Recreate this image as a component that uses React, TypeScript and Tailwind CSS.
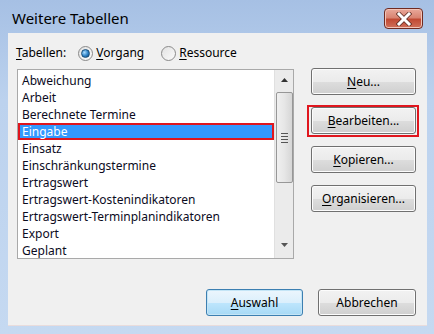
import { useState } from 'react'

const tables = [
  'Abweichung',
  'Arbeit',
  'Berechnete Termine',
  'Eingabe',
  'Einsatz',
  'Einschränkungstermine',
  'Ertragswert',
  'Ertragswert-Kostenindikatoren',
  'Ertragswert-Terminplanindikatoren',
  'Export',
  'Geplant',
]

const font = { fontFamily: '"Noto Sans", "Open Sans", sans-serif' }

function Key({ k, rest }: { k: string; rest: string }) {
  return (
    <span>
      <span className="underline underline-offset-2">{k}</span>
      {rest}
    </span>
  )
}

function Radio({ checked }: { checked: boolean }) {
  return (
    <span className="flex h-[15px] w-[15px] items-center justify-center rounded-full border border-[#8a8a8a] bg-gradient-to-br from-[#e2e2e2] to-[#fbfbfb]">
      {checked && (
        <span className="h-[9px] w-[9px] rounded-full border border-[#1b4f7a] bg-[radial-gradient(circle_at_35%_35%,#a9dcff,#2b7fc4_55%,#0d3f6e)]" />
      )}
    </span>
  )
}

function WinButton({ children, wide = 'w-[105px]', primary = false }: { children: React.ReactNode; wide?: string; primary?: boolean }) {
  return (
    <button
      className={
        'flex h-[27px] items-center justify-center rounded-[3px] border text-[12px] text-black ' +
        wide +
        (primary
          ? ' border-[#3c7fb1] bg-[linear-gradient(#ecf6fd_0%,#dbeffc_50%,#bee6fd_51%,#a7d9f5_100%)] shadow-[inset_0_0_0_1px_#c4e5f6]'
          : ' border-[#707070] bg-[linear-gradient(#f2f2f2_0%,#ebebeb_50%,#dddddd_51%,#cfcfcf_100%)] shadow-[inset_0_0_0_1px_#fcfcfc]')
      }
    >
      {children}
    </button>
  )
}

function Scrollbar() {
  return (
    <div className="flex w-[19px] flex-col items-center bg-[#ebebeb] border-l border-[#e0e0e0]">
      <div className="flex h-[20px] items-center justify-center">
        <svg width="7" height="4" viewBox="0 0 7 4">
          <path d="M0 4 L3.5 0 L7 4 Z" fill="#333" />
        </svg>
      </div>
      <div className="mt-[2px] flex h-[91px] w-[17px] items-center justify-center rounded-[2px] border border-[#979797] bg-[linear-gradient(90deg,#f0f0f0,#e6e6e6_50%,#d6d6d6)]">
        <div className="flex flex-col gap-[2px]">
          <span className="h-px w-[7px] bg-[#555]" />
          <span className="h-px w-[7px] bg-[#555]" />
          <span className="h-px w-[7px] bg-[#555]" />
          <span className="h-px w-[7px] bg-[#555]" />
        </div>
      </div>
      <div className="flex-1" />
      <div className="mb-[8px] flex h-[10px] items-center justify-center">
        <svg width="7" height="4" viewBox="0 0 7 4">
          <path d="M0 0 L3.5 4 L7 0 Z" fill="#555" />
        </svg>
      </div>
    </div>
  )
}

export default function App() {
  const [selected] = useState('Eingabe')

  return (
    <div
      className="flex h-[334px] w-[434px] flex-col overflow-hidden bg-[linear-gradient(#a6c0e4,#bcd2ee_30%,#c5d9f1)]"
      style={font}
    >
      {/* title bar */}
      <div className="flex h-[33px] shrink-0 items-start justify-between pl-[12px] pr-[11px]">
        <span className="mt-[8px] text-[15px] leading-[20px] text-black">Weitere Tabellen</span>
        <button className="mt-[8px] flex h-[21px] w-[39px] items-center justify-center rounded-[4px] border border-[#6f2b22] bg-[linear-gradient(#e9a99b,#d98472_45%,#c14a34_55%,#d0705a)] shadow-[inset_0_0_0_1px_#f2c4b8]">
          <svg width="16" height="14" viewBox="0 0 16 14">
            <path d="M3 2 L13 12 M13 2 L3 12" stroke="#5a2a22" strokeWidth="4.5" strokeLinecap="square" />
            <path d="M3 2 L13 12 M13 2 L3 12" stroke="#fff" strokeWidth="3" strokeLinecap="square" />
          </svg>
        </button>
      </div>

      {/* client area */}
      <div className="ml-[8px] h-[293px] w-[419px] shrink-0 border-b border-[#e9dcdc] bg-[#f0f0f0] text-[12px] text-black">
        <div className="flex h-[16px] items-center pl-[8px] mt-[12px]">
          <Key k="T" rest="abellen:" />
          <span className="ml-[12px] flex items-center gap-[3px]">
            <Radio checked />
            <Key k="V" rest="organg" />
          </span>
          <span className="ml-[17px] flex items-center gap-[3px]">
            <Radio checked={false} />
            <Key k="R" rest="essource" />
          </span>
        </div>

        <div className="mt-[8px] flex">
          <div className="ml-[9px] flex h-[190px] w-[277px] border border-[#a9a9a9] bg-white">
            <ul className="flex-1 pt-[2px] leading-[17px]">
              {tables.map((t) => (
                <li
                  key={t}
                  className={
                    'h-[17px] whitespace-nowrap pl-[4px] ' +
                    (t === selected
                      ? 'bg-[#3399ff] text-white shadow-[inset_0_0_0_2px_#e0161e]'
                      : 'text-[#0b0b1e]')
                  }
                >
                  {t}
                </li>
              ))}
            </ul>
            <Scrollbar />
          </div>

          <div className="ml-[17px] -mt-px flex flex-col gap-[12px]">
            <WinButton>
              <Key k="N" rest="eu..." />
            </WinButton>
            <div className="relative">
              <WinButton>
                <Key k="B" rest="earbeiten..." />
              </WinButton>
              <span className="pointer-events-none absolute -left-[4px] -right-[3px] -top-[2px] -bottom-[3px] border-2 border-[#e0161e]" />
            </div>
            <WinButton>
              <Key k="K" rest="opieren..." />
            </WinButton>
            <WinButton>
              <Key k="O" rest="rganisieren..." />
            </WinButton>
          </div>
        </div>

        <div className="mt-[30px] flex justify-end gap-[15px] pr-[11px]">
          <WinButton wide="w-[97px]" primary>
            <Key k="A" rest="uswahl" />
          </WinButton>
          <WinButton wide="w-[98px]">Abbrechen</WinButton>
        </div>
      </div>
    </div>
  )
}
